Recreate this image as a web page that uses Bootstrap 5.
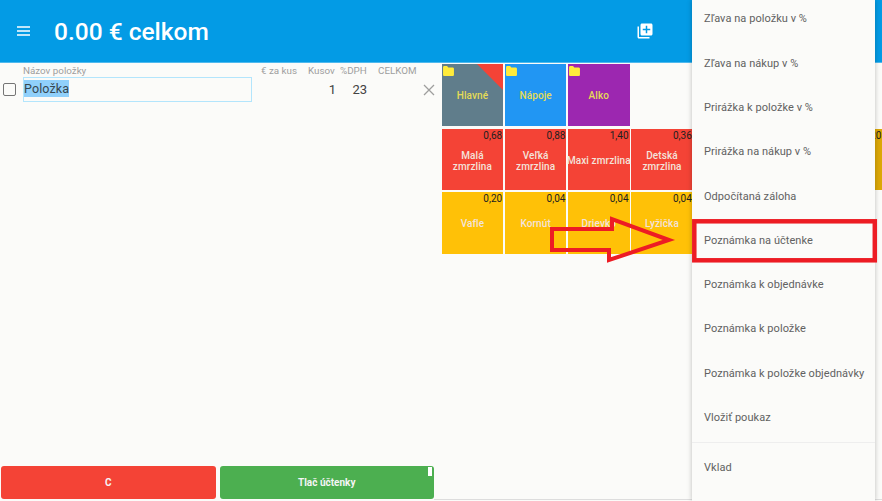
<!DOCTYPE html>
<html lang="sk">
<head>
  <meta charset="UTF-8" />
  <title>Pokladňa</title>
  <link rel="stylesheet" href="https://cdn.jsdelivr.net/npm/bootstrap@5.3.0/dist/css/bootstrap.min.css" />
  <style>
    html, body { height: 100%; }
    body { background: #fbfbf9; font-family: Roboto, "Liberation Sans", sans-serif; overflow: hidden; color: #424242; }
    .app-shell { width: 882px; height: 501px; position: relative; overflow: hidden; }
    .top-bar { height: 63px; background: #039be5; color: #fff; border-bottom: 1px solid #4fb9ee; padding-left: 17px; }
    .top-title { font-size: 24.5px; font-weight: 500; margin-left: 24px; margin-top: 2px; line-height: 1; }
    .add-icon { position: absolute; left: 636px; top: 22px; }
    .work-area { height: 438px; background: linear-gradient(#dddddd, #dddddd) 434px calc(100% - 1px) / 100% 1px no-repeat; }
    .bill-pane { width: 441px; flex: none; }
    .bill-head, .bill-row { display: grid; grid-template-columns: 23px 238px 47px 32px 38px 50px 1fr; }
    .bill-head { font-size: 9.8px; color: #9e9e9e; height: 13px; line-height: 13px; margin-top: 1px; }
    .bill-row { height: 25px; font-size: 13px; align-items: center; }
    .tick-box { width: 13px; height: 13px; border: 1.5px solid #757575; border-radius: 2px; margin-left: 3px; }
    .name-field { width: 229px; height: 25px; border: 1px solid #b3e5fc; font-size: 12.5px; line-height: 23px; color: #37474f; }
    .name-field span { display: inline-block; height: 17px; line-height: 17px; background: #90d0fb; letter-spacing: .1px; vertical-align: 1px; }
    .qty-cell { text-align: right; }
    .qty-one { padding-right: 4px; }
    .qty-vat { padding-right: 11px; }
    .close-x { margin-left: -5px; }
    .pay-row { padding-bottom: 2px; gap: 4px; width: 434px; }
    .pay-btn { height: 33px; flex: 1; font-size: 10px; font-weight: 700; color: #f5f5f5; border: 0; border-radius: 3px; padding: 0; position: relative; }
    .pay-red { background: #f44336; margin-left: 1px; }
    .pay-green { background: #4caf50; }
    .pay-tick { position: absolute; right: 2px; top: 1px; width: 4px; height: 9px; background: #fff; }
    .tile-grid { display: grid; grid-template-columns: repeat(7, 61.5px); column-gap: 1.7px; grid-template-rows: 62px 62px 62px; row-gap: 2px; margin: 1px 0 0 .7px; align-self: flex-start; }
    .tile { position: relative; display: flex; align-items: center; justify-content: center; text-align: center; font-size: 10px; line-height: 11px; font-weight: 500; color: #f3e3dc; letter-spacing: .1px; white-space: nowrap; }
    .tile-price { position: absolute; top: 1px; right: 1px; color: #212121; font-weight: 400; letter-spacing: 0; }
    .tile-label { margin-top: 2px; }
    .tile-folder { position: absolute; left: 1px; top: 2px; }
    .tile-corner { position: absolute; right: 0; top: 0; }
    .tile-grey { background: #607d8b; color: #e5dc55; }
    .tile-blue { background: #2196f3; color: #e5dc55; }
    .tile-purple { background: #9c27b0; color: #e5dc55; }
    .tile-red { background: #f44336; margin-top: 1px; }
    .tile-gold { background: #ffc107; }
    .tile-gold .tile-label { margin-top: 0; }
    .tile-dim { background: #dca807; grid-column: 7; margin-top: 1px; }
    .side-menu { position: absolute; left: 692px; top: 0; width: 183px; height: 501px; background: #fbfbf9; box-shadow: 0 0 5px rgba(0,0,0,.25); }
    .side-menu .list-group-item { background: transparent; border: 0; height: 44.3px; padding: 1px 0 0 12px; display: flex; align-items: center; font-size: 11px; color: #616161; letter-spacing: .05px; border-radius: 0; }
    .side-menu .menu-first { margin-top: -3px; }
    .menu-rule { height: 1px; background: #eeeeee; margin: 2px 0 3px; }
    .note-mark { position: absolute; left: 0; top: 0; pointer-events: none; }
  </style>
</head>
<body>
  <div class="app-shell">
    <!-- Horná lišta -->
    <header class="top-bar d-flex align-items-center">
      <svg width="13" height="10" viewBox="0 0 13 10"><path d="M0 1h13M0 5h13M0 9h13" stroke="#fff" stroke-width="1.4" /></svg>
      <div class="top-title">0.00 € celkom</div>
      <svg class="add-icon" width="18" height="18" viewBox="0 0 24 24" fill="#fff"><path d="M4 6H2v14c0 1.1.9 2 2 2h14v-2H4V6zm16-4H8c-1.1 0-2 .9-2 2v12c0 1.1.9 2 2 2h12c1.1 0 2-.9 2-2V4c0-1.1-.9-2-2-2zm-1 9h-4v4h-2v-4H9V9h4V5h2v4h4v2z"/></svg>
    </header>

    <div class="work-area d-flex">
      <!-- Položky účtenky -->
      <section class="bill-pane d-flex flex-column">
        <div class="bill-head">
          <span></span><span>Názov položky</span><span>€ za kus</span><span>Kusov</span><span>%DPH</span><span>CELKOM</span><span></span>
        </div>
        <div class="bill-row">
          <div class="tick-box"></div>
          <div class="name-field"><span>Položka</span></div>
          <span></span>
          <span class="qty-cell qty-one">1</span>
          <span class="qty-cell qty-vat">23</span>
          <span></span>
          <svg class="close-x" width="12" height="12" viewBox="0 0 12 12"><path d="M1 1l10 10M11 1L1 11" stroke="#9e9e9e" stroke-width="1.3" /></svg>
        </div>
        <div class="pay-row d-flex mt-auto">
          <button class="pay-btn pay-red" type="button">C</button>
          <button class="pay-btn pay-green" type="button">Tlač účtenky<span class="pay-tick"></span></button>
        </div>
      </section>

      <!-- Dlaždice tovaru -->
      <section class="tile-grid">
        <div class="tile tile-grey">
          <svg class="tile-corner" width="26" height="26" viewBox="0 0 26 26"><path d="M0 0h26v26z" fill="#f44336"/></svg>
          <svg class="tile-folder" width="11" height="10" viewBox="0 0 12 11"><path d="M0 1.5C0 .7.6 0 1.4 0h3l1.4 1.6h4.8c.8 0 1.4.7 1.4 1.5v6.4c0 .8-.6 1.5-1.4 1.5H1.400C.6 11 0 10.300 0 9.500z" fill="#ffeb3b"/></svg>
          <span>Hlavné</span>
        </div>
        <div class="tile tile-blue">
          <svg class="tile-folder" width="11" height="10" viewBox="0 0 12 11"><path d="M0 1.5C0 .7.6 0 1.4 0h3l1.4 1.6h4.8c.8 0 1.4.7 1.4 1.5v6.4c0 .8-.6 1.5-1.4 1.5H1.400C.6 11 0 10.300 0 9.500z" fill="#ffeb3b"/></svg>
          <span>Nápoje</span>
        </div>
        <div class="tile tile-purple">
          <svg class="tile-folder" width="11" height="10" viewBox="0 0 12 11"><path d="M0 1.5C0 .7.6 0 1.4 0h3l1.4 1.6h4.8c.8 0 1.4.7 1.4 1.5v6.4c0 .8-.6 1.5-1.4 1.5H1.400C.6 11 0 10.300 0 9.500z" fill="#ffeb3b"/></svg>
          <span>Alko</span>
        </div>
        <div></div><div></div><div></div><div></div>

        <div class="tile tile-red"><span class="tile-price">0,68</span><span class="tile-label">Malá<br>zmrzlina</span></div>
        <div class="tile tile-red"><span class="tile-price">0,88</span><span class="tile-label">Veľká<br>zmrzlina</span></div>
        <div class="tile tile-red"><span class="tile-price">1,40</span><span class="tile-label">Maxi zmrzlina</span></div>
        <div class="tile tile-red"><span class="tile-price">0,36</span><span class="tile-label">Detská<br>zmrzlina</span></div>
        <div></div><div></div>
        <div class="tile tile-dim"><span class="tile-price">0,20</span></div>

        <div class="tile tile-gold"><span class="tile-price">0,20</span><span class="tile-label">Vafle</span></div>
        <div class="tile tile-gold"><span class="tile-price">0,04</span><span class="tile-label">Kornút</span></div>
        <div class="tile tile-gold"><span class="tile-price">0,04</span><span class="tile-label">Drievko</span></div>
        <div class="tile tile-gold"><span class="tile-price">0,04</span><span class="tile-label">Lyžička</span></div>
      </section>
    </div>

    <!-- Bočné menu -->
    <nav class="side-menu">
      <ul class="list-group list-group-flush">
        <li class="list-group-item menu-first">Zľava na položku v %</li>
        <li class="list-group-item">Zľava na nákup v %</li>
        <li class="list-group-item">Prirážka k položke v %</li>
        <li class="list-group-item">Prirážka na nákup v %</li>
        <li class="list-group-item">Odpočítaná záloha</li>
        <li class="list-group-item">Poznámka na účtenke</li>
        <li class="list-group-item">Poznámka k objednávke</li>
        <li class="list-group-item">Poznámka k položke</li>
        <li class="list-group-item">Poznámka k položke objednávky</li>
        <li class="list-group-item">Vložiť poukaz</li>
        <li class="menu-rule list-unstyled"></li>
        <li class="list-group-item">Vklad</li>
      </ul>
    </nav>

    <!-- Červené označenie -->
    <svg class="note-mark" width="882" height="501" viewBox="0 0 882 501">
      <path d="M552 229H612V219L669 240L609 260V250H552Z" fill="none" stroke="#ed1c24" stroke-width="4" />
      <rect x="694.300" y="221.300" width="180.500" height="39" fill="none" stroke="#ed1c24" stroke-width="4.500" />
    </svg>
  </div>
  <script src="https://cdn.jsdelivr.net/npm/bootstrap@5.3.0/dist/js/bootstrap.bundle.min.js"></script>
</body>
</html>
